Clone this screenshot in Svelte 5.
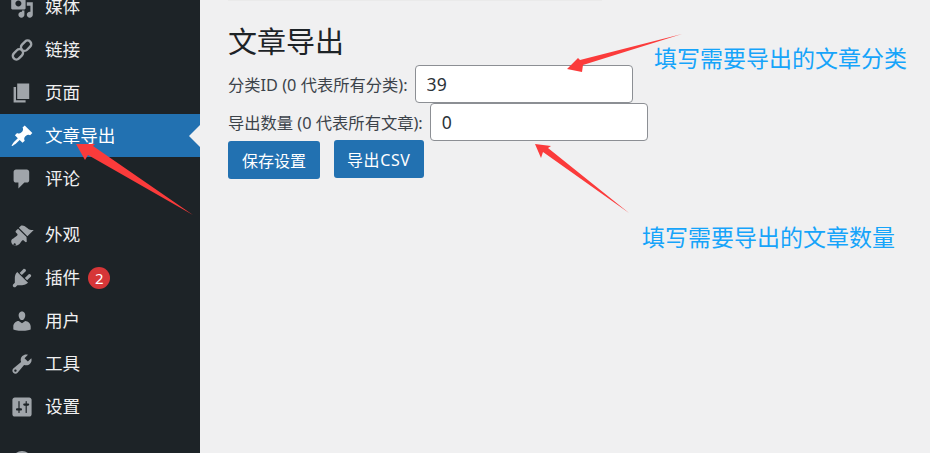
<script>
  const top = [
    { label: '媒体', d: 'M13 11V4c0-.55-.45-1-1-1h-1.67L9 1H5L3.67 3H2c-.55 0-1 .45-1 1v7c0 .55.45 1 1 1h10c.55 0 1-.45 1-1zM7 4.500c1.380 0 2.500 1.120 2.500 2.500S8.380 9.500 7 9.500 4.500 8.380 4.500 7 5.620 4.500 7 4.500zM14 6h5v10.500c0 1.380-1.120 2.500-2.500 2.500S14 17.880 14 16.500s1.120-2.500 2.500-2.500c.17 0 .34.020.5.050V9h-3V6zm-4 8.050V13h2v3.500c0 1.380-1.120 2.500-2.500 2.500S7 17.880 7 16.500 8.120 14 9.500 14c.17 0 .34.020.5.050z' },
    { label: '链接', links: true },
    { label: '页面', d: 'M6 15V2h10v13H6zm-1 1h8v2H3V5h2v11z' },
    { label: '文章导出', active: true, d: 'M10.440 3.020l1.820-1.820 6.360 6.350-1.830 1.820c-1.050-.68-2.480-.57-3.410.36l-.75.75c-.92.93-1.040 2.350-.35 3.410l-1.830 1.820-2.410-2.410-2.800 2.790c-.42.42-3.380 2.710-3.800 2.290s1.860-3.390 2.280-3.810l2.790-2.790L4.100 9.360l1.830-1.820c1.050.69 2.480.57 3.400-.36l.75-.75c.93-.92 1.050-2.350.36-3.410z' },
    { label: '评论', d: 'M5 2h9c1.100 0 2 .9 2 2v7c0 1.100-.9 2-2 2h-2l-5 5v-5H5c-1.100 0-2-.9-2-2V4c0-1.100.9-2 2-2z' }
  ];
  const bottom = [
    { label: '外观', d: 'M14.480 11.060L7.410 3.990l1.500-1.500c.5-.56 2.300-.47 3.510.32 1.210.8 1.430 1.280 2.910 2.100 1.180.64 2.450 1.260 4.450.85zm-.71.71L6.700 4.700 4.930 6.470c-.39.39-.39 1.020 0 1.410l1.060 1.060c.39.39.39 1.030 0 1.420-.6.6-1.430 1.110-2.210 1.690-.35.26-.7.53-1.010.84C1.430 13.230 1 14.200 1 15.500c0 1.900 1.600 3.500 3.500 3.500 1.300 0 2.300-.5 3.100-1.200.3-.3.6-.7.8-1 .6-.8 1.100-1.600 1.700-2.200.4-.4 1-.4 1.400 0l1.060 1.060c.39.39 1.020.39 1.410 0zm-9.190 6.890c-.39.39-1.020.39-1.410 0s-.39-1.020 0-1.410 1.020-.39 1.410 0 .39 1.020 0 1.410z' },
    { label: '插件', badge: 2, d: 'M13.110 4.360L9.870 7.600 8 5.730l3.240-3.240c.35-.34 1.050-.2 1.560.32.52.51.66 1.210.31 1.550zm-8 1.770l.91-1.120 9.010 9.010-1.190.84c-.71.71-2.630 1.160-3.820 1.160H6.140L4.900 17.260c-.59.59-1.540.59-2.120 0-.59-.58-.59-1.530 0-2.120l1.240-1.240v-3.880c0-1.130.4-3.190 1.090-3.890zm7.260 3.970l3.240-3.240c.34-.35 1.040-.21 1.550.31.52.51.66 1.210.31 1.550l-3.240 3.250z' },
    { label: '用户', d: 'M10 9.250c-2.270 0-2.730-3.440-2.730-3.440C7 4.020 7.820 2 9.970 2c2.160 0 2.980 2.020 2.710 3.810 0 0-.41 3.440-2.680 3.440zm0 2.570L12.720 10c2.390 0 4.520 2.330 4.520 4.530v2.490s-3.650 1.130-7.240 1.130c-3.650 0-7.240-1.130-7.240-1.130v-2.490c0-2.250 1.940-4.480 4.470-4.480z' },
    { label: '工具', d: 'M16.680 9.770c-1.340 1.340-3.300 1.670-4.950.99l-5.410 6.520c-.99.99-2.590.99-3.580 0s-.99-2.590 0-3.570l6.520-5.420c-.68-1.650-.35-3.610.99-4.950 1.280-1.280 3.120-1.620 4.720-1.060l-2.890 2.890 2.820 2.820 2.860-2.870c.53 1.580.18 3.390-1.080 4.650zM3.810 16.210c.4.39 1.040.39 1.430 0 .4-.4.4-1.040 0-1.430-.39-.4-1.030-.4-1.430 0-.39.39-.39 1.030 0 1.430z' },
    { label: '设置', d: 'M18 16V4c0-1.100-.9-2-2-2H4c-1.100 0-2 .9-2 2v12c0 1.100.9 2 2 2h12c1.100 0 2-.9 2-2zM8 11h1c.55 0 1 .45 1 1s-.45 1-1 1H8v1.500c0 .28-.22.5-.5.5s-.5-.22-.5-.5V13H6c-.55 0-1-.45-1-1s.45-1 1-1h1V5.500c0-.28.22-.5.5-.5s.5.22.5.5V11zm5-2h-1c-.55 0-1-.45-1-1s.45-1 1-1h1V5.500c0-.28.22-.5.5-.5s.5.22.5.5V7h1c.55 0 1 .45 1 1s-.45 1-1 1h-1v5.500c0 .28-.22.5-.5.5s-.5-.22-.5-.5V9z' }
  ];
</script>

{#snippet row(item)}
  <li class="item" class:active={item.active}>
    <svg class="icon" viewBox="0 0 20 20">
      {#if item.links}
        <!-- two chain links, the dashicon path didn't hold up at this size -->
        <g class="chain">
          <rect x="8.6" y="3.4" width="9.6" height="6" rx="3" transform="rotate(-45 13.4 6.4)" />
          <rect x="1.8" y="10.6" width="9.6" height="6" rx="3" transform="rotate(-45 6.6 13.6)" />
        </g>
      {:else}
        <path d={item.d} />
      {/if}
    </svg>
    <span class="label">{item.label}</span>
    {#if item.badge}<b class="badge">{item.badge}</b>{/if}
  </li>
{/snippet}

<div class="page">
  <nav class="menu">
    <ul class="group">
      {#each top as item}{@render row(item)}{/each}
    </ul>
    <ul class="group">
      {#each bottom as item}{@render row(item)}{/each}
    </ul>
    <div class="collapse"></div>
  </nav>

  <main class="content">
    <div class="rule"></div>
    <h1>文章导出</h1>
    <div class="field first">
      <label for="cat">分类ID (0 代表所有分类):</label>
      <input id="cat" type="text" value="39" />
    </div>
    <div class="field">
      <label for="num">导出数量 (0 代表所有文章):</label>
      <input id="num" type="text" value="0" />
    </div>
    <div class="actions">
      <button class="save">保存设置</button>
      <button class="export">导出CSV</button>
    </div>
  </main>

  <svg class="arrows" viewBox="0 0 930 453">
    <polygon points="76,144 95,144 93,146 193,215 88,155 85,160" />
    <polygon points="567,69 578,58 580,60 682,34 583,65 582,72" />
    <polygon points="535,144 551,146 548,148 629,213 543,152 541,158" />
  </svg>
  <p class="note one">填写需要导出的文章分类</p>
  <p class="note two">填写需要导出的文章数量</p>
</div>

<style>
  :global(body) {
    margin: 0;
    background: #f0f0f1;
  }

  .page {
    position: relative;
    display: flex;
    width: 930px;
    height: 453px;
    overflow: hidden;
    font-family: "Noto Sans", "Noto Sans CJK SC", sans-serif;
  }

  .menu {
    flex: 0 0 200px;
    background: #1d2327;
    overflow: hidden;
  }

  .group {
    list-style: none;
    margin: 0 0 13px;
    padding: 0;
  }
  .group:first-child { margin-top: -15px; }

  .item {
    position: relative;
    display: flex;
    align-items: center;
    height: 43px;
    color: #f0f0f1;
    font-size: 17.6px;
  }
  .item.active {
    background: #2271b1;
    color: #fff;
  }
  .item.active::after {
    content: "";
    position: absolute;
    right: 0;
    top: 50%;
    margin-top: -11px;
    border: 11px solid transparent;
    border-right-color: #f0f0f1;
    border-left-width: 0;
  }

  .label { margin-bottom: 2px; }

  .icon {
    flex: 0 0 24px;
    width: 24px;
    height: 24px;
    margin: 0 11px 0 10px;
    fill: #a0a5aa;
  }
  .active .icon { fill: #fff; }

  .chain {
    fill: none;
    stroke: #a0a5aa;
    stroke-width: 2;
  }

  .badge {
    width: 22px;
    height: 22px;
    margin-left: 8px;
    border-radius: 50%;
    background: #d63638;
    color: #fff;
    font-size: 15px;
    font-weight: 400;
    line-height: 22px;
    text-align: center;
  }

  .collapse {
    width: 20px;
    height: 20px;
    margin: 23px 0 0 12px;
    border-radius: 50%;
    background: #a0a5aa;
  }

  .content {
    flex: 1;
    padding-left: 28px;
    color: #3c434a;
  }

  .rule {
    width: 374px;
    height: 1px;
    background: #eaeaea;
  }

  h1 {
    margin: 23px 0 0;
    color: #1d2327;
    font-size: 29px;
    font-weight: 400;
    line-height: 36px;
  }

  .field {
    display: flex;
    align-items: center;
    gap: 7px;
    height: 38px;
    font-size: 16.3px;
  }
  .field.first { margin-top: 5px; }

  input {
    box-sizing: border-box;
    width: 218px;
    height: 38px;
    padding: 0 11px;
    border: 1px solid #8c8f94;
    border-radius: 4px;
    background: #fff;
    color: #2c3338;
    font: inherit;
    font-size: 17.6px;
  }

  .actions {
    display: flex;
    align-items: flex-start;
    gap: 14px;
  }

  button {
    height: 38px;
    padding: 0 14px;
    border: 0;
    border-radius: 3px;
    background: #2271b1;
    color: #fff;
    font: inherit;
    font-size: 16px;
  }
  .export {
    margin-top: -1px;
    padding: 0 13px;
    letter-spacing: .6px;
  }

  .arrows {
    position: absolute;
    inset: 0;
    width: 930px;
    height: 453px;
    fill: #fb3b3b;
    pointer-events: none;
  }

  .note {
    position: absolute;
    margin: 0;
    color: #16a4fa;
    font-size: 23px;
    line-height: 28px;
    white-space: nowrap;
  }
  .one { left: 654px; top: 44px; }
  .two { left: 642px; top: 223px; }
</style>
